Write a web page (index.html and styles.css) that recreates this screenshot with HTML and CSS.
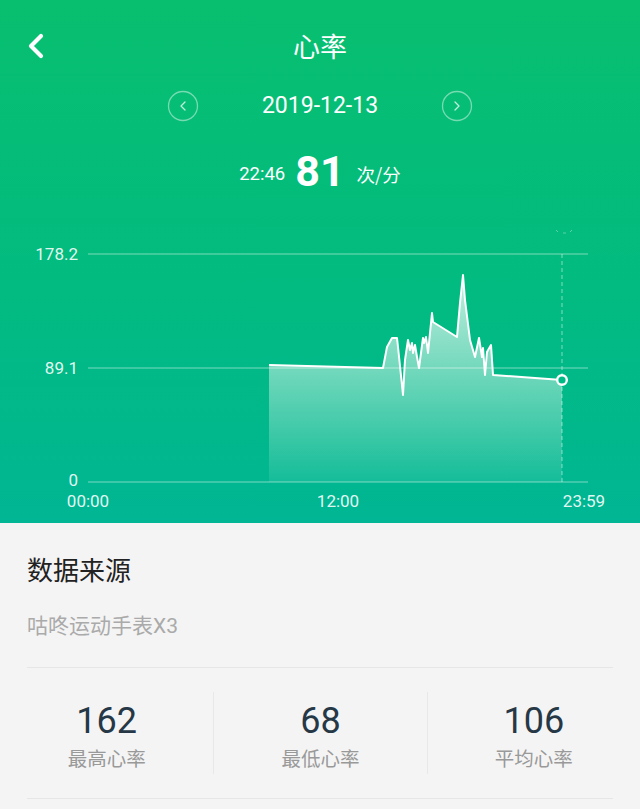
FILE: index.html
```html
<!DOCTYPE html>
<html lang="zh">
<head>
<meta charset="utf-8">
<link rel="stylesheet" href="styles.css">
</head>
<body>
<div class="header">
  <div class="nav">
    <svg class="back" width="20" height="26" viewBox="0 0 20 26"><path d="M15 3 L5 13 L15 23" fill="none" stroke="#fff" stroke-width="4.2" stroke-linecap="round" stroke-linejoin="round"/></svg>
    <div class="title">心率</div>
  </div>
  <div class="date-row">
    <svg class="arrow" width="32" height="32" viewBox="0 0 32 32"><circle cx="16" cy="16" r="14.5" fill="none" stroke="rgba(255,255,255,0.45)" stroke-width="1.3"/><path d="M18 12 L14 16 L18 20" fill="none" stroke="rgba(255,255,255,0.75)" stroke-width="1.3" stroke-linecap="round" stroke-linejoin="round"/></svg>
    <div class="date">2019-12-13</div>
    <svg class="arrow" width="32" height="32" viewBox="0 0 32 32"><circle cx="16" cy="16" r="14.5" fill="none" stroke="rgba(255,255,255,0.45)" stroke-width="1.3"/><path d="M14 12 L18 16 L14 20" fill="none" stroke="rgba(255,255,255,0.75)" stroke-width="1.3" stroke-linecap="round" stroke-linejoin="round"/></svg>
  </div>
  <div class="rate-row">
    <span class="time">22:46</span>
    <span class="bpm">81</span>
    <span class="unit">次/分</span>
  </div>
  <svg class="chart" width="640" height="329" viewBox="0 194 640 329">
    <defs>
      <linearGradient id="fill" x1="0" y1="275" x2="0" y2="482" gradientUnits="userSpaceOnUse">
        <stop offset="0" stop-color="#fff" stop-opacity="0.75"/>
        <stop offset="0.45" stop-color="#fff" stop-opacity="0.45"/>
        <stop offset="1" stop-color="#fff" stop-opacity="0.08"/>
      </linearGradient>
    </defs>
    <g stroke="rgba(255,255,255,0.32)" stroke-width="1.3">
      <line x1="88" y1="254" x2="588" y2="254"/>
      <line x1="88" y1="368" x2="588" y2="368"/>
      <line x1="88" y1="482" x2="588" y2="482"/>
    </g>
    <path fill="url(#fill)" d="M269 482 L269 365 L383 368 L387 347 L392 338 L397 338 L398 347 L403 395 L405 360 L408 340 L410 350 L412 343 L413 353 L415 345 L417 357 L419 368 L423 338 L424 343 L426 337 L428 353 L432 313 L433 322 L457 337 L460 303 L463 275 L465 300 L470 340 L475 357 L479 338 L482 357 L483 348 L485 375 L487 352 L491 345 L493 375 L562 380 L562 482 Z"/>
    <polyline fill="none" stroke="#fff" stroke-width="2" stroke-linejoin="round" points="269,365 383,368 387,347 392,338 397,338 398,347 403,395 405,360 408,340 410,350 412,343 413,353 415,345 417,357 419,368 423,338 424,343 426,337 428,353 432,313 433,322 457,337 460,303 463,275 465,300 470,340 475,357 479,338 482,357 483,348 485,375 487,352 491,345 493,375 562,380"/>
    <line x1="562" y1="254" x2="562" y2="482" stroke="rgba(255,255,255,0.5)" stroke-width="1" stroke-dasharray="4 3"/>
    <path d="M556 230 L558 232 M563 233 L566 233 M570 232 L572 230" stroke="rgba(255,255,255,0.35)" stroke-width="1"/>
    <circle cx="562" cy="380" r="4.8" fill="#00ba86" stroke="#fff" stroke-width="2.4"/>
    <g class="axis">
      <text x="78" y="260" text-anchor="end">178.2</text>
      <text x="78" y="374" text-anchor="end">89.1</text>
      <text x="78" y="486" text-anchor="end">0</text>
      <text x="88" y="507" text-anchor="middle">00:00</text>
      <text x="338" y="507" text-anchor="middle">12:00</text>
      <text x="584" y="507" text-anchor="middle">23:59</text>
    </g>
  </svg>
</div>
<div class="panel">
  <div class="source-title">数据来源</div>
  <div class="source-name">咕咚运动手表X3</div>
  <div class="stats">
    <div class="stat">
      <div class="num">162</div>
      <div class="label">最高心率</div>
    </div>
    <div class="stat">
      <div class="num">68</div>
      <div class="label">最低心率</div>
    </div>
    <div class="stat">
      <div class="num">106</div>
      <div class="label">平均心率</div>
    </div>
  </div>
  <div class="rule"></div>
</div>
</body>
</html>
```
FILE: styles.css
```css
* { box-sizing: border-box; }
html, body { margin: 0; padding: 0; }
body {
  width: 640px;
  height: 809px;
  overflow: hidden;
  background: #f4f4f4;
  font-family: Roboto, "Noto Sans CJK SC", sans-serif;
}
.header {
  height: 523px;
  background: linear-gradient(180deg, #08bf6f 0%, #02bb80 55%, #00b694 100%);
  color: #fff;
  display: flex;
  flex-direction: column;
}
.nav {
  height: 92px;
  position: relative;
  display: flex;
  align-items: center;
  justify-content: center;
}
.back {
  position: absolute;
  left: 26px;
  top: 33px;
}
.title {
  font-size: 27px;
  line-height: 1;
  font-family: "Noto Sans CJK SC", sans-serif;
  margin-top: -2px;
}
.date-row {
  height: 28px;
  display: flex;
  align-items: center;
  justify-content: center;
}
.arrow { flex: none; }
.date {
  width: 242px;
  text-align: center;
  font-size: 23px;
  line-height: 28px;
}
.rate-row {
  height: 74px;
  display: flex;
  align-items: center;
  justify-content: center;
  padding-top: 28px;
}
.time {
  font-size: 18.5px;
  margin-right: 10px;
  margin-top: 6px;
}
.bpm {
  font-size: 43px;
  font-weight: 700;
  margin-right: 12px;
}
.unit {
  font-size: 18.5px;
  font-family: "Noto Sans CJK SC", sans-serif;
  margin-top: 6px;
}
.chart { display: block; flex: none; }
.axis text {
  fill: rgba(255,255,255,0.9);
  font-size: 17px;
  font-family: Roboto, sans-serif;
}
.panel {
  padding: 0 27px;
}
.source-title {
  font-family: "Noto Sans CJK SC", sans-serif;
  font-size: 26px;
  color: #222;
  line-height: 36px;
  padding-top: 28px;
}
.source-name {
  font-family: Roboto, "Noto Sans CJK SC", sans-serif;
  font-size: 21px;
  color: #aaa;
  line-height: 28px;
  margin-top: 25px;
  padding-bottom: 27px;
  border-bottom: 1px solid #e6e6e6;
}
.stats {
  display: grid;
  grid-template-columns: 1fr 1fr 1fr;
  height: 130px;
  margin: 0 -27px;
  padding-top: 24px;
}
.stat {
  height: 82px;
  display: flex;
  flex-direction: column;
  align-items: center;
  padding-top: 9px;
  border-left: 1px solid #e8e8e8;
}
.stat:first-child { border-left: none; }
.num {
  font-size: 36px;
  color: #263846;
  line-height: 40px;
}
.label {
  font-family: "Noto Sans CJK SC", sans-serif;
  font-size: 19.5px;
  color: #999;
  line-height: 26px;
  margin-top: 4px;
}
.rule {
  border-top: 1px solid #e6e6e6;
}
```
